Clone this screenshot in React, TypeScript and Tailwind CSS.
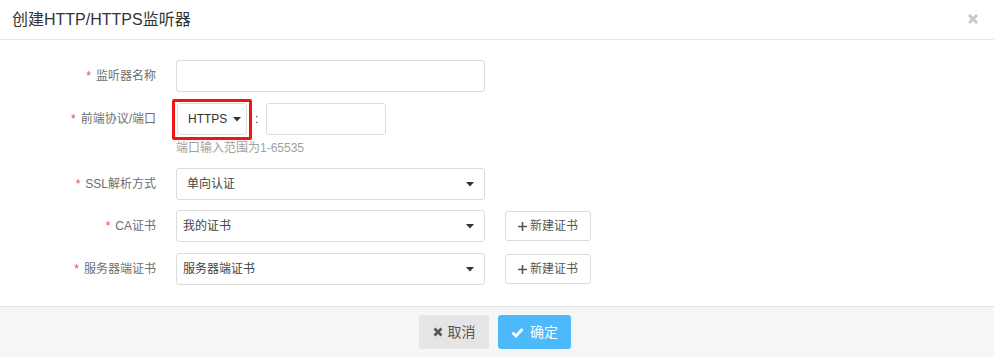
import React from "react";

const FONT = '"Liberation Sans", Arial, "Noto Sans CJK SC", sans-serif';

function Caret({ className = "" }: { className?: string }) {
  return (
    <svg width="8" height="5" viewBox="0 0 8 5" className={className}>
      <path d="M0 0 L8 0 L4 4.5 Z" fill="#333" />
    </svg>
  );
}

function Label({ text }: { text: string }) {
  return (
    <div className="w-[156px] shrink-0 text-right text-[12px] text-[#6e6e6e] leading-[18px]">
      <span className="text-[#f04a4a] mr-[5px]">*</span>
      {text}
    </div>
  );
}

function Select({ value, pl }: { value: string; pl: string }) {
  return (
    <div
      className={`w-[309px] h-[32px] border border-[#dcdcdc] rounded-[3px] bg-white flex items-center justify-between pr-[10px] ${pl}`}
    >
      <span className="text-[12px] text-[#444]">{value}</span>
      <Caret />
    </div>
  );
}

function NewCertButton() {
  return (
    <div className="ml-[20px] w-[86px] h-[30px] border border-[#dcdcdc] rounded-[3px] bg-white flex items-center justify-center text-[12px] text-[#555]">
      <svg width="9" height="9" viewBox="0 0 9 9" className="mr-[3px]">
        <path d="M4.5 0 V9 M0 4.5 H9" stroke="#555" strokeWidth="1.6" />
      </svg>
      新建证书
    </div>
  );
}

export default function App() {
  return (
    <div className="w-[994px] h-[357px] bg-white flex flex-col overflow-hidden" style={{ fontFamily: FONT }}>
      {/* Header */}
      <div className="h-[40px] shrink-0 border-b border-[#e8e8e8] flex items-center justify-between pl-[12px] pr-[16px]">
        <span className="text-[16px] text-[#333]">创建HTTP/HTTPS监听器</span>
        <svg width="10" height="10" viewBox="0 0 10 10" className="mt-[-2px]">
          <path d="M1 1 L9 9 M9 1 L1 9" stroke="#c6c6c6" strokeWidth="2.6" />
        </svg>
      </div>

      {/* Body */}
      <div className="flex-1 flex flex-col pt-[20px]">
        {/* Row 1 */}
        <div className="flex items-center h-[32px]">
          <Label text="监听器名称" />
          <div className="ml-[20px] w-[309px] h-[32px] border border-[#dcdcdc] rounded-[3px] bg-white" />
        </div>

        {/* Row 2 */}
        <div className="flex items-center h-[32px] mt-[11px]">
          <Label text="前端协议/端口" />
          <div className="ml-[21px] relative">
            <div className="w-[70px] h-[32px] border border-[#dcdcdc] rounded-[3px] bg-white flex items-center pl-[10px] text-[12px] text-[#333]">
              HTTPS
              <Caret className="ml-[6px]" />
            </div>
            <div className="absolute left-[-5px] top-[-4px] w-[80px] h-[41px] border-[3px] border-[#f01414] rounded-[2px]" />
          </div>
          <span className="ml-[8px] w-[11px] text-[12px] text-[#333]">:</span>
          <div className="w-[120px] h-[32px] border border-[#dcdcdc] rounded-[3px] bg-white" />
        </div>
        <div className="ml-[176px] mt-[4px] h-[18px] text-[12px] leading-[18px] text-[#a0a0a0]">端口输入范围为1-65535</div>

        {/* SSL */}
        <div className="flex items-center h-[32px] mt-[11px]">
          <Label text="SSL解析方式" />
          <div className="ml-[20px]">
            <Select value="单向认证" pl="pl-[10px]" />
          </div>
        </div>

        {/* CA */}
        <div className="flex items-center h-[32px] mt-[10px]">
          <Label text="CA证书" />
          <div className="ml-[20px]">
            <Select value="我的证书" pl="pl-[6px]" />
          </div>
          <NewCertButton />
        </div>

        {/* Server cert */}
        <div className="flex items-center h-[32px] mt-[11px]">
          <Label text="服务器端证书" />
          <div className="ml-[20px]">
            <Select value="服务器端证书" pl="pl-[6px]" />
          </div>
          <NewCertButton />
        </div>
      </div>

      {/* Footer */}
      <div className="h-[51px] shrink-0 border-t border-[#e3e3e3] bg-[#f6f6f6] flex items-center justify-center gap-[9px] pr-[4px]">
        <div className="w-[70px] h-[34px] rounded-[3px] bg-[#e5e5e5] flex items-center justify-center text-[14px] text-[#555]">
          <svg width="10" height="10" viewBox="0 0 10 10" className="mr-[5px]">
            <path d="M1.5 1.5 L8.5 8.5 M8.5 1.5 L1.5 8.5" stroke="#555" strokeWidth="2.6" />
          </svg>
          取消
        </div>
        <div className="w-[73px] h-[34px] rounded-[3px] bg-[#4cb9fb] flex items-center justify-center text-[14px] text-white">
          <svg width="13" height="11" viewBox="0 0 13 11" className="mr-[6px]">
            <path d="M1.5 5.5 L5 9 L11.5 2" stroke="#fff" strokeWidth="2.8" fill="none" />
          </svg>
          确定
        </div>
      </div>
    </div>
  );
}
